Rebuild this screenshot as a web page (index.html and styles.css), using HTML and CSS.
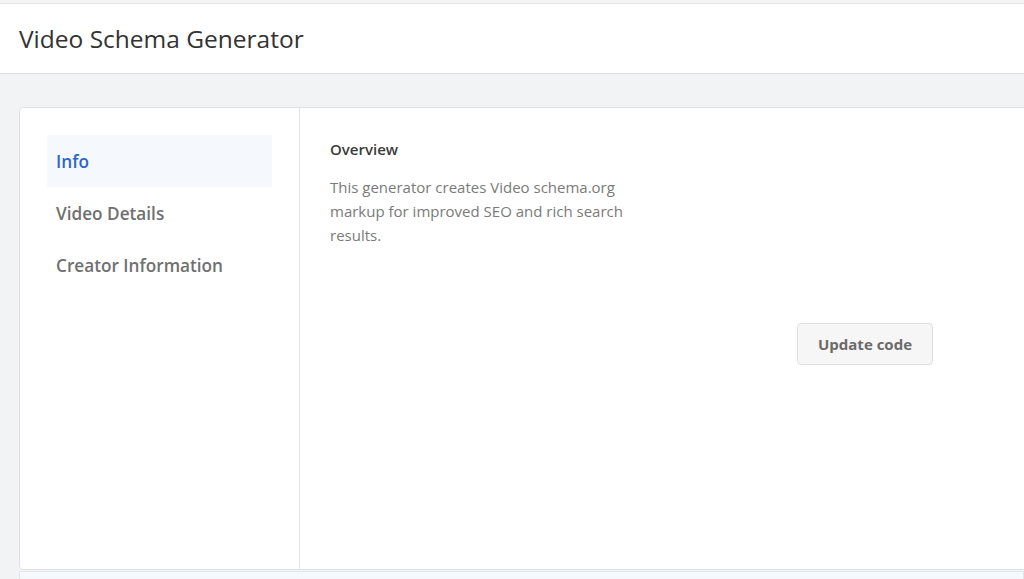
FILE: index.html
```html
<!DOCTYPE html>
<html lang="en">
<head>
<meta charset="UTF-8" />
<meta name="viewport" content="width=device-width, initial-scale=1.0" />
<title>Video Schema Generator</title>
<link rel="stylesheet" href="styles.css">
</head>
<body>
  <div class="topbar"></div>
  <header class="page-header">
    <h1>Video Schema Generator</h1>
  </header>
  <main class="page">
    <div class="generator">
      <nav class="sidebar">
        <a class="nav-item active" href="#">Info</a>
        <a class="nav-item" href="#">Video Details</a>
        <a class="nav-item" href="#">Creator Information</a>
      </nav>
      <section class="content">
        <div class="overview">
          <h2>Overview</h2>
          <p>This generator creates Video schema.org markup for improved SEO and rich search results.</p>
        </div>
        <div class="actions">
          <button class="btn">Update code</button>
        </div>
      </section>
    </div>
    <div class="output"></div>
  </main>
</body>
</html>
```

FILE: styles.css
```css
* { box-sizing: border-box; }
html, body { height: 100%; }
body {
  margin: 0;
  font-family: "Open Sans", "Noto Sans", sans-serif;
  background: #f2f3f5;
  color: #333;
  overflow: hidden;
}
.topbar {
  height: 4px;
  background: #f3f3f4;
  border-bottom: 1px solid #e4e4e6;
}
.page-header {
  background: #fff;
  height: 70px;
  border-bottom: 1px solid #dcdcdf;
  display: flex;
  align-items: center;
  padding: 0 19px;
}
.page-header h1 {
  margin: 0;
  font-size: 24.5px;
  font-weight: 400;
  color: #333;
}
.page {
  padding: 33px 0 0 19px;
}
.generator {
  width: 1100px;
  height: 463px;
  display: flex;
  background: #fff;
  border: 1px solid #dde1e6;
  border-radius: 4px;
}
/* Sidebar */
.sidebar {
  width: 280px;
  border-right: 1px solid #e3e5e8;
  padding: 27px 27px 0 27px;
  display: flex;
  flex-direction: column;
}
.nav-item {
  display: block;
  height: 52px;
  line-height: 54px;
  padding: 0 9px;
  font-size: 17.2px;
  font-weight: 600;
  color: #707070;
  text-decoration: none;
}
.nav-item.active {
  background: #f5f8fd;
  color: #2d67c4;
}
/* Content */
.content {
  flex: 1;
  display: flex;
  padding: 29px 30px 0 30px;
}
.overview {
  width: 467px;
}
.overview h2 {
  margin: 0 0 14px;
  font-size: 15px;
  font-weight: 600;
  color: #3a3a3a;
  line-height: 24px;
}
.overview p {
  margin: 0;
  width: 305px;
  font-size: 15px;
  line-height: 24px;
  color: #7a7a7a;
}
.actions {
  padding-top: 186px;
}
.btn {
  width: 136px;
  height: 42px;
  background: #f6f6f6;
  border: 1px solid #e0e0e0;
  border-radius: 4px;
  font-family: inherit;
  font-size: 15px;
  font-weight: 700;
  color: #6a6a6a;
  cursor: pointer;
}
.output {
  margin-top: 1px;
  height: 40px;
  background: #f5f8fd;
  border: 1px solid #e3e6ea;
}
```
